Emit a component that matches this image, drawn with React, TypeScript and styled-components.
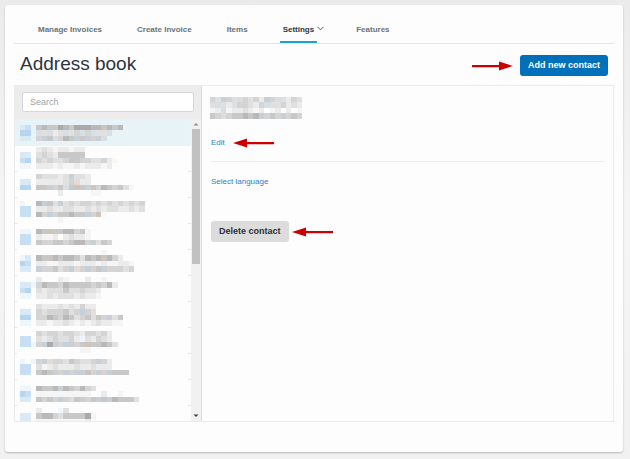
import React from "react";
import styled, { createGlobalStyle } from "styled-components";

const GlobalStyle = createGlobalStyle`
  *, *::before, *::after { box-sizing: border-box; }
  body {
    margin: 0;
    background: linear-gradient(#ebebeb, #f5f5f5 45%, #f1f1f1) fixed;
    font-family: "Liberation Sans", Arial, sans-serif;
    color: #2d3440;
  }
  button, input { font-family: inherit; }
`;

const Page = styled.div`
  padding: 5px 7px 8px 5px;
`;

const Card = styled.main`
  padding: 0 9px 30px;
  background: #fdfdfd;
  border-radius: 3px;
  box-shadow: 0 1px 2px rgba(0, 0, 0, 0.24);
`;

const Nav = styled.nav`
  display: flex;
  gap: 29px;
  height: 39px;
  padding: 11px 21px 0;
  border-bottom: 1px solid #e6e6e6;
`;

const NavItem = styled.div`
  display: flex;
`;

const NavLink = styled.a<{ $active?: boolean }>`
  height: 27px;
  padding: 0 3px;
  border-bottom: 2px solid ${(p) => (p.$active ? "#1a9fe0" : "transparent")};
  font-size: 8px;
  font-weight: bold;
  line-height: 28px;
  color: ${(p) => (p.$active ? "#2d3440" : "#6c7378")};
  text-decoration: none;
  white-space: nowrap;
`;

const ChevronIcon = styled.svg`
  width: 7px;
  height: 5px;
  margin-top: 10px;
`;

const Header = styled.header`
  display: flex;
  align-items: center;
  justify-content: space-between;
  height: 41px;
  padding: 3px 6px 1px;
`;

const Title = styled.h1`
  margin: 0;
  padding-bottom: 4px;
  font-size: 19px;
  font-weight: normal;
  line-height: 24px;
`;

const Inline = styled.div<{ $gap: number }>`
  display: flex;
  align-items: center;
  gap: ${(p) => p.$gap}px;
`;

const Button = styled.button<{ $primary?: boolean }>`
  height: 21px;
  padding: 0 8px;
  border: 0;
  border-radius: 3px;
  background: ${(p) => (p.$primary ? "#0070ba" : "#dcdcdc")};
  color: ${(p) => (p.$primary ? "#ffffff" : "#2d3038")};
  font-size: 9px;
  font-weight: bold;
  line-height: 21px;
  white-space: nowrap;
`;

const ArrowIcon = styled.svg`
  width: 41px;
  height: 10px;
  flex: none;
`;

const Panel = styled.section`
  display: flex;
  border: 1px solid #ebebeb;
`;

const Sidebar = styled.aside`
  flex: 0 0 187px;
  border-right: 1px solid #dcdcdc;
`;

const SearchBar = styled.div`
  padding: 6px 7px 7px;
  background: #ececec;
`;

const SearchInput = styled.input`
  display: block;
  width: 100%;
  height: 20px;
  padding: 0 7px;
  border: 1px solid #d6d6d6;
  border-radius: 2px;
  background: #ffffff;
  font-size: 9px;
  color: #2d3440;
  &::placeholder { color: #9da3a6; opacity: 1; }
`;

const ListArea = styled.div`
  display: flex;
  max-height: 302px;
  overflow: hidden;
`;

const Contacts = styled.ul`
  flex: 1;
  margin: 0;
  padding: 0;
  list-style: none;
`;

const Contact = styled.li<{ $selected?: boolean }>`
  height: ${(p) => (p.$selected ? 27 : 26)}px;
  padding-left: 5px;
  background: ${(p) =>
    p.$selected
      ? "#e8f3f8"
      : "linear-gradient(90deg, #e6e6e6 2px, transparent 2px calc(100% - 3px), #e6e6e6 calc(100% - 3px)) bottom / 100% 1px no-repeat"};
`;

const MosaicSvg = styled.svg`
  display: block;
  overflow: visible;
`;

const Scrollbar = styled.div`
  display: flex;
  flex-direction: column;
  width: 10px;
  background: #f1f1f1;
`;

const ScrollArrow = styled.svg`
  width: 10px;
  height: 10px;
  flex: none;
`;

const Thumb = styled.div`
  flex: 0 0 135px;
  margin: 0 1px;
  background: #c1c1c1;
`;

const ScrollSpace = styled.div`
  flex: 1;
`;

const Details = styled.div`
  flex: 1;
  padding: 11px 9px;
`;

const Identity = styled.div`
  margin: 0 0 18px -1px;
`;

const TextLink = styled.a`
  font-size: 8px;
  line-height: 12px;
  color: #2f7fc0;
  text-decoration: none;
`;

const Rule = styled.hr`
  margin: 12px 0 14px;
  border: 0;
  border-top: 1px solid #ececec;
`;

const LanguageRow = styled.div`
  display: flex;
  margin-bottom: 33px;
`;

const tones: Record<string, string> = {
  a: "#f5f5f5",
  b: "#ebebeb",
  c: "#e0e0e0",
  d: "#d4d4d4",
  e: "#c8c8c8",
  f: "#b9b9b9",
  g: "#a9aaac",
  p: "#e3dcd6",
  q: "#d8dfe4",
  r: "#c9cfd6",
  s: "#cbc5bd",
  w: "#fdf8f2",
  "1": "#eef5fb",
  "2": "#d9e9f5",
  "3": "#c7dff4",
  "4": "#b6d6f0",
};

const CELL = 5.43;

function Mosaic({ rows, top = 0, height, columns }: { rows: string[]; top?: number; height: number; columns: number }) {
  return (
    <MosaicSvg width={Math.round(columns * CELL)} height={height} shapeRendering="crispEdges" aria-hidden="true">
      {rows.flatMap((row, y) =>
        [...row].map((tone, x) =>
          tone === "." ? null : (
            <rect key={`${x}-${y}`} x={x * CELL} y={top + y * CELL} width={CELL} height={CELL} fill={tones[tone]} />
          ),
        ),
      )}
    </MosaicSvg>
  );
}

const contacts = [
  { top: 6, rows: ["23.efeegfegggffsfef", "44.qcqbcqcdqdqccq", "22.dreqdfererdrq"] },
  { top: 1, rows: ["...bcbabbabb", "22.cdcbeeeee", "34.dcdccdeeddccdbw", "1a.bbbabaababbbab"] },
  { top: 2, rows: ["...dcccbcrccb", "22.bbbbbcdpbb", "44.serdeqesersdfedeca", ".......b.....aa"] },
  { top: 3, rows: ["1..frecrcdcddcdcdcdcdcd", "33.bbcbbccbbcbcbccbbcbc", "33.fdrdeefeerdsw", ".......a"] },
  { top: 5, rows: ["11.feseeffdea", "33.baab.bcbba", "33.eddeedeffdrced"] },
  { top: 0, rows: ["...............a", "12.fesfeffecfefsfdb", "43.bbaabbbabbbabaabba", "22.rddecdrpdrderdddcd"] },
  { top: 1, rows: ["...b...ba...b..a", "221dfeedfeeeededfb", "34.cbccceccdccb", "11.bbcbcccbcbba"] },
  { top: 2, rows: ["...cbbbcbcbdbb", "22.dcdddecdrdc", "44.ddfedfecdecedrce", "11.bbabbcbababcbbaa"] },
  { top: 3, rows: ["...dcddcddcbddcdb", "33.cbcdccdb1cbdcb", "331drgrdrrdeseefec", "...........aa"] },
  { top: 5, rows: ["1.1drpddcedccdrdb", "33.cabcbbbcbbcbbb", "33.eferdrdrrsdrdreee"] },
  { top: 6, rows: ["11.feefrfedfdc", "43.aaaaaaaaaa..b..a", "22.sdedrdperdererfeeec"] },
  { top: 2, rows: ["...b...1c", "22.effdceeeega", "22.aaaaaaaaab"] },
];

const identity = ["dcrdcqdcdbrdqcbdc", "cqcbcddcbdqccdbcb", "abqabbcbab.ab.b.a", "edqdeefefrdedrded"];

function Arrow({ direction }: { direction: "left" | "right" }) {
  return (
    <ArrowIcon viewBox="0 0 41 10" aria-hidden="true">
      {direction === "right" ? (
        <path d="M0 4H27V0.5L41 5L27 9.5V6.2H0Z" fill="#cc0000" />
      ) : (
        <path d="M41 4H14V0.5L0 5L14 9.5V6.2H41Z" fill="#cc0000" />
      )}
    </ArrowIcon>
  );
}

export default function App() {
  return (
    <>
      <GlobalStyle />
      <Page>
        <Card>
          <Nav>
            <NavItem><NavLink href="#manage">Manage Invoices</NavLink></NavItem>
            <NavItem><NavLink href="#create">Create Invoice</NavLink></NavItem>
            <NavItem><NavLink href="#items">Items</NavLink></NavItem>
            <NavItem>
              <NavLink href="#settings" $active aria-current="page">Settings</NavLink>
              <ChevronIcon viewBox="0 0 7 5" aria-hidden="true">
                <path d="M0.5 0.8L3.5 3.8L6.5 0.8" fill="none" stroke="#555b62" strokeWidth="1" />
              </ChevronIcon>
            </NavItem>
            <NavItem><NavLink href="#features">Features</NavLink></NavItem>
          </Nav>
          <Header>
            <Title>Address book</Title>
            <Inline $gap={7}>
              <Arrow direction="right" />
              <Button type="button" $primary>Add new contact</Button>
            </Inline>
          </Header>
          <Panel>
            <Sidebar>
              <SearchBar>
                <SearchInput type="search" placeholder="Search" aria-label="Search" />
              </SearchBar>
              <ListArea>
                <Contacts>
                  {contacts.map((contact, index) => (
                    <Contact key={index} $selected={index === 0}>
                      <Mosaic rows={contact.rows} top={contact.top} height={26} columns={25} />
                    </Contact>
                  ))}
                </Contacts>
                <Scrollbar aria-hidden="true">
                  <ScrollArrow viewBox="0 0 10 10"><path d="M2.5 6.5L5 4L7.5 6.5Z" fill="#909090" /></ScrollArrow>
                  <Thumb />
                  <ScrollSpace />
                  <ScrollArrow viewBox="0 0 10 10"><path d="M2.5 3.5L5 6L7.5 3.5Z" fill="#404040" /></ScrollArrow>
                </Scrollbar>
              </ListArea>
            </Sidebar>
            <Details>
              <Identity>
                <Mosaic rows={identity} height={22} columns={17} />
              </Identity>
              <Inline $gap={8}>
                <TextLink href="#edit">Edit</TextLink>
                <Arrow direction="left" />
              </Inline>
              <Rule />
              <LanguageRow>
                <TextLink href="#language">Select language</TextLink>
              </LanguageRow>
              <Inline $gap={3}>
                <Button type="button">Delete contact</Button>
                <Arrow direction="left" />
              </Inline>
            </Details>
          </Panel>
        </Card>
      </Page>
    </>
  );
}
